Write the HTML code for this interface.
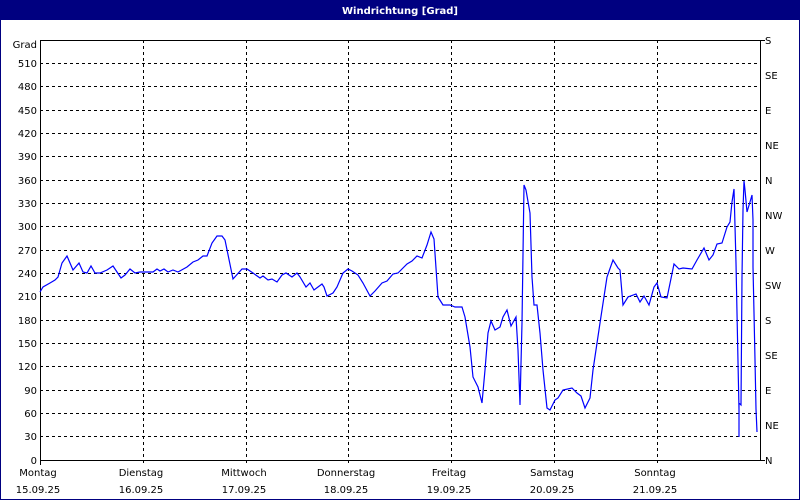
<!DOCTYPE html>
<html><head><meta charset="utf-8"><style>
html,body{margin:0;padding:0;background:#fff}
svg{display:block}
text{font-family:"DejaVu Sans","Liberation Sans",sans-serif;font-size:10px;fill:#000}
</style></head><body>
<svg width="800" height="500" viewBox="0 0 800 500" xmlns="http://www.w3.org/2000/svg">
<rect x="0" y="0" width="800" height="500" fill="#fff"/>
<rect x="0.5" y="0.5" width="799" height="499" fill="none" stroke="#000080"/>
<rect x="0" y="0" width="800" height="20" fill="#000080"/>
<text x="400" y="14" text-anchor="middle" style="fill:#fff;font-weight:bold;font-size:10px">Windrichtung [Grad]</text>
<g stroke="#000" stroke-dasharray="3,3" stroke-width="1">
<line x1="40" y1="63.5" x2="760" y2="63.5"/>
<line x1="40" y1="86.5" x2="760" y2="86.5"/>
<line x1="40" y1="110.5" x2="760" y2="110.5"/>
<line x1="40" y1="133.5" x2="760" y2="133.5"/>
<line x1="40" y1="156.5" x2="760" y2="156.5"/>
<line x1="40" y1="180.5" x2="760" y2="180.5"/>
<line x1="40" y1="203.5" x2="760" y2="203.5"/>
<line x1="40" y1="226.5" x2="760" y2="226.5"/>
<line x1="40" y1="250.5" x2="760" y2="250.5"/>
<line x1="40" y1="273.5" x2="760" y2="273.5"/>
<line x1="40" y1="296.5" x2="760" y2="296.5"/>
<line x1="40" y1="320.5" x2="760" y2="320.5"/>
<line x1="40" y1="343.5" x2="760" y2="343.5"/>
<line x1="40" y1="366.5" x2="760" y2="366.5"/>
<line x1="40" y1="390.5" x2="760" y2="390.5"/>
<line x1="40" y1="413.5" x2="760" y2="413.5"/>
<line x1="40" y1="436.5" x2="760" y2="436.5"/>
<line x1="143.5" y1="40" x2="143.5" y2="465"/>
<line x1="246.5" y1="40" x2="246.5" y2="465"/>
<line x1="348.5" y1="40" x2="348.5" y2="465"/>
<line x1="451.5" y1="40" x2="451.5" y2="465"/>
<line x1="554.5" y1="40" x2="554.5" y2="465"/>
<line x1="657.5" y1="40" x2="657.5" y2="465"/>
</g>
<rect x="40.5" y="40.5" width="720" height="420" fill="none" stroke="#000"/>
<g stroke="#000">
<line x1="760" y1="40.5" x2="765" y2="40.5"/><line x1="760" y1="460.5" x2="765" y2="460.5"/>
<line x1="40.5" y1="460" x2="40.5" y2="465"/>
</g>
<polyline fill="none" stroke="#0000ff" stroke-width="1.2" points="40,292 43,287 50,283 55,280 58,277 62,263 67,256 73,270 79,263 83,272 87,273 91,266 95,273 100,273 107,270 113,266 121,278 125,275 130,269 135,273 140,272 153,272 157,269 160,271 164,269 168,272 173,270 178,272 187,267 193,262 198,260 203,256 207,256 212,243 217,236 222,236 225,240 233,279 242,269 247,269 253,273 260,278 263,276 268,280 272,279 277,282 282,275 286,273 292,277 297,273 300,277 306,287 310,283 314,290 322,284 324,287 327,296 333,293 337,287 343,273 348,269 352,271 358,275 363,283 370,296 375,291 382,283 387,281 393,274 398,273 407,264 412,261 417,256 422,258 427,245 431,232 434,239 438,297 443,305 450,305 455,307 462,307 465,317 470,347 473,377 478,387 482,403 485,370 488,333 491,321 495,330 500,327 503,317 507,310 511,326 516,317 518,350 520,405 522,323 524,185 526,190 530,213 532,277 534,305 537,305 540,333 543,370 547,408 550,410 555,400 558,398 563,390 572,388 577,393 581,396 585,408 590,398 593,370 600,323 607,277 613,260 618,268 620,270 623,305 628,297 636,294 640,302 644,296 649,305 654,287 657,283 661,297 667,298 674,264 679,269 683,268 692,269 697,260 704,248 709,260 713,255 717,244 722,243 727,227 730,222 732,202 734,189 736,263 737,313 738,362 739,410 739,437 739,403 741,405 742,277 743,210 744,181 745,190 747,212 750,202 752,195 753,220 753,267 754,313 755,360 756,409 757,432"/>
<g text-anchor="end">
<text x="37" y="48">Grad</text>
<text x="37" y="67">510</text><text x="37" y="90">480</text><text x="37" y="114">450</text>
<text x="37" y="137">420</text><text x="37" y="160">390</text><text x="37" y="184">360</text>
<text x="37" y="207">330</text><text x="37" y="230">300</text><text x="37" y="254">270</text>
<text x="37" y="277">240</text><text x="37" y="300">210</text><text x="37" y="324">180</text>
<text x="37" y="347">150</text><text x="37" y="370">120</text><text x="37" y="394">90</text>
<text x="37" y="417">60</text><text x="37" y="440">30</text><text x="37" y="464">0</text>
</g>
<g>
<text x="765" y="44">S</text><text x="765" y="79">SE</text><text x="765" y="114">E</text>
<text x="765" y="149">NE</text><text x="765" y="184">N</text><text x="765" y="219">NW</text>
<text x="765" y="254">W</text><text x="765" y="289">SW</text><text x="765" y="324">S</text>
<text x="765" y="359">SE</text><text x="765" y="394">E</text><text x="765" y="429">NE</text>
<text x="765" y="464">N</text>
</g>
<g text-anchor="middle">
<text x="38" y="476">Montag</text><text x="38" y="493">15.09.25</text>
<text x="141" y="476">Dienstag</text><text x="141" y="493">16.09.25</text>
<text x="244" y="476">Mittwoch</text><text x="244" y="493">17.09.25</text>
<text x="346" y="476">Donnerstag</text><text x="346" y="493">18.09.25</text>
<text x="449" y="476">Freitag</text><text x="449" y="493">19.09.25</text>
<text x="552" y="476">Samstag</text><text x="552" y="493">20.09.25</text>
<text x="655" y="476">Sonntag</text><text x="655" y="493">21.09.25</text>
</g>
</svg>
</body></html>
